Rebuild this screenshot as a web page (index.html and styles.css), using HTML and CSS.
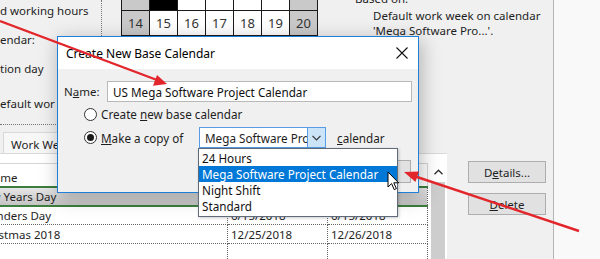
FILE: index.html
```html
<!DOCTYPE html>
<html lang="en">
<head>
    <meta charset="UTF-8">
    <meta name="viewport" content="width=device-width, initial-scale=1.0">
    <title>Create New Base Calendar</title>
    <link rel="stylesheet" href="styles.css">
</head>
<body>
    <div class="screen">
        <!-- Change Working Time window, behind the dialog -->
        <div class="window">
            <div class="panel">
                <div class="top">
                    <div class="labels">
                        <span>d working hours</span>
                        <span>endar:</span>
                        <span>tion day</span>
                        <span class="last">efault wor</span>
                    </div>

                    <div class="calendar">
                        <div class="cal-grid">
                            <div class="cell weekend"></div>
                            <div class="cell dark"></div>
                            <div class="cell"></div>
                            <div class="cell"></div>
                            <div class="cell"></div>
                            <div class="cell"></div>
                            <div class="cell weekend"></div>
                            <div class="cell weekend">14</div>
                            <div class="cell">15</div>
                            <div class="cell">16</div>
                            <div class="cell">17</div>
                            <div class="cell">18</div>
                            <div class="cell">19</div>
                            <div class="cell weekend">20</div>
                        </div>
                    </div>

                    <div class="based">
                        <div class="based-title">Based on:</div>
                        <div class="based-text">Default work week on calendar<br>'Mega Software Pro...'.</div>
                    </div>
                </div>

                <div class="bottom">
                    <div class="tabs-area">
                        <div class="sep"></div>
                        <div class="tabs">
                            <div class="tab">Work Weeks</div>
                        </div>
                        <div class="tab-panel">
                            <div class="grid-wrap">
                                <table class="exceptions">
                                    <colgroup>
                                        <col class="c-name">
                                        <col class="c-date">
                                        <col class="c-date">
                                    </colgroup>
                                    <thead>
                                        <tr><th class="h-name">Name</th><th>Start</th><th>Finish</th></tr>
                                    </thead>
                                    <tbody>
                                        <tr class="selected"><td>New Years Day</td><td>1/1/2018</td><td>1/2/2018</td></tr>
                                        <tr><td>Founders Day</td><td>6/15/2018</td><td>6/15/2018</td></tr>
                                        <tr><td>Christmas 2018</td><td>12/25/2018</td><td>12/26/2018</td></tr>
                                        <tr><td></td><td></td><td></td></tr>
                                    </tbody>
                                </table>
                                <div class="scrollbar">
                                    <div class="scroll-up">
                                        <svg width="9" height="6" viewBox="0 0 9 6"><path d="M0.5 5.2 L4.5 1.2 L8.5 5.2" fill="none" stroke="#333" stroke-width="1.4"/></svg>
                                    </div>
                                    <div class="scroll-thumb"></div>
                                </div>
                            </div>
                        </div>
                    </div>

                    <div class="side-buttons">
                        <button class="btn">D<u>e</u>tails...</button>
                        <button class="btn"><u>D</u>elete</button>
                    </div>
                </div>
            </div>
            <div class="outside"></div>
        </div>

        <!-- Create New Base Calendar dialog -->
        <div class="dialog">
            <div class="titlebar">
                <span class="title">Create New Base Calendar</span>
                <svg class="close" width="12" height="12" viewBox="0 0 12 12"><path d="M0.5 0.5 L11.5 11.5 M11.5 0.5 L0.5 11.5" stroke="#111" stroke-width="1.1"/></svg>
            </div>
            <div class="dialog-body">
                <div class="name-row">
                    <label class="name-label" for="cal-name">N<u>a</u>me:</label>
                    <div class="textbox" id="cal-name">US Mega Software Project Calendar</div>
                </div>

                <div class="option">
                    <span class="radio"></span>
                    <span>Create <u>n</u>ew base calendar</span>
                </div>

                <div class="option copy">
                    <div class="copy-label">
                        <span class="radio checked"></span>
                        <span><u>M</u>ake a copy of</span>
                    </div>
                    <div class="combo">
                        <div class="combo-value">Mega Software Project Calendar</div>
                        <div class="combo-btn">
                            <svg width="9" height="6" viewBox="0 0 9 6"><path d="M0.5 0.8 L4.5 4.8 L8.5 0.8" fill="none" stroke="#333" stroke-width="1.2"/></svg>
                        </div>
                        <ul class="droplist">
                            <li>24 Hours</li>
                            <li class="active">Mega Software Project Calendar</li>
                            <li>Night Shift</li>
                            <li>Standard</li>
                        </ul>
                    </div>
                    <span class="combo-after"><u>c</u>alendar</span>
                </div>

                <div class="dialog-footer">
                    <button class="btn ok">OK</button>
                </div>
            </div>
        </div>

        <svg class="cursor" width="13" height="20" viewBox="0 0 13 20">
            <path d="M1 1 L1 16 L4.6 12.6 L7.2 18.6 L9.4 17.6 L6.8 11.8 L11.6 11.8 Z" fill="#fff" stroke="#000" stroke-width="1" stroke-linejoin="round"/>
        </svg>

        <!-- red callout arrows -->
        <svg class="arrows" width="600" height="259" viewBox="0 0 600 259">
            <line x1="0" y1="21" x2="157" y2="80" stroke="#e2262b" stroke-width="2.4"/>
            <polygon points="167,84 153,85.8 157,75" fill="#e2262b"/>
            <line x1="579" y1="231" x2="414" y2="176" stroke="#e2262b" stroke-width="2.4"/>
            <polygon points="404,172 419,171.5 415.5,182" fill="#e2262b"/>
        </svg>
    </div>
</body>
</html>
```

FILE: styles.css
```css
:root {
    --face: #f0f0f0;
    --text: #1e1e1e;
    --accent: #1f7ed6;
    --select: #0078d7;
    --arrow: #e2262b;
}

* {
    box-sizing: border-box;
    margin: 0;
    padding: 0;
}

body {
    background: var(--face);
    color: var(--text);
    font-family: "Noto Sans", "Liberation Sans", sans-serif;
    font-size: 11.5px;
}

.screen {
    position: relative;
    width: 600px;
    height: 259px;
    overflow: hidden;
}

.window {
    display: flex;
    height: 100%;
}

.panel {
    width: 554px;
    background: var(--face);
    border-right: 1px solid #b4b4b4;
}

.outside {
    flex: 1;
    background: #f9f9f9;
}

/* top area: labels, month grid, legend */
.top {
    display: grid;
    grid-template-columns: 101px 217px 1fr;
    height: 124px;
}

.labels {
    display: flex;
    flex-direction: column;
    gap: 12px;
    padding-top: 2px;
    line-height: 17px;
    white-space: nowrap;
}

.labels .last {
    margin-top: 6px;
}

.calendar {
    border-left: 1px dotted #777;
    padding-left: 19px;
}

.cal-grid {
    display: grid;
    grid-template-columns: repeat(7, 27px);
    grid-template-rows: 10px 24px;
    gap: 1px;
    width: 197px;
    background: #1a1a1a;
    border: 1px solid #1a1a1a;
    border-top: none;
}

.cell {
    background: #fff;
    font-size: 13px;
    color: #333;
    display: flex;
    align-items: center;
    justify-content: center;
}

.cell.weekend {
    background: #c9c9c9;
}

.cell.dark {
    background: #000;
}

.based {
    line-height: 15px;
    white-space: nowrap;
}

.based-title {
    margin-top: -9px;
    padding-left: 37px;
}

.based-text {
    padding-left: 55px;
    margin-top: 2px;
}

/* bottom area: tabs, exceptions grid, buttons */
.bottom {
    display: flex;
}

.tabs-area {
    width: 447px;
}

.sep {
    width: 100px;
    border-top: 1px dotted #777;
}

.tabs {
    display: flex;
    padding: 7px 0 0 3px;
}

.tab {
    width: 86px;
    height: 21px;
    padding: 4px 0 0 7px;
    background: #f7f7f7;
    border: 1px solid #d9d9d9;
    border-bottom: none;
    white-space: nowrap;
    overflow: hidden;
}

.tab-panel {
    height: 120px;
    background: #fff;
    border-top: 1px solid #d9d9d9;
    padding-top: 9px;
    overflow: hidden;
}

.grid-wrap {
    display: flex;
    align-items: flex-start;
}

.exceptions {
    width: 451px;
    margin-left: -24px;
    table-layout: fixed;
    border-collapse: collapse;
    white-space: nowrap;
}

.c-name {
    width: 251px;
}

.c-date {
    width: 100px;
}

.exceptions th {
    height: 23px;
    font-weight: normal;
    text-align: left;
    vertical-align: bottom;
    padding: 0 0 1px 6px;
    border: 1px solid #d5d5d5;
    border-bottom: 2px solid #3d7d3d;
}

.exceptions th.h-name {
    padding-left: 8px;
}

.exceptions td {
    height: 19px;
    padding-left: 3px;
    overflow: hidden;
    border-right: 1px dotted #666;
    border-bottom: 1px dotted #666;
}

.exceptions td:first-child {
    padding-left: 0;
}

.exceptions tr.selected td {
    background: linear-gradient(#e6e6e6, #c4c4c4);
    border-bottom: 2px solid #3d7d3d;
}

.scrollbar {
    width: 18px;
    margin-left: 1px;
    display: flex;
    flex-direction: column;
    align-items: center;
}

.scroll-up {
    width: 17px;
    height: 18px;
    display: flex;
    align-items: center;
    justify-content: center;
}

.scroll-thumb {
    width: 14px;
    height: 90px;
    margin-top: 1px;
    background: #cdcdcd;
}

.side-buttons {
    display: flex;
    flex-direction: column;
    gap: 10px;
    margin: 37px 0 0 21px;
}

.btn {
    width: 78px;
    height: 22px;
    font-family: inherit;
    font-size: 11.5px;
    color: var(--text);
    background: #e1e1e1;
    border: 1px solid #adadad;
}

/* dialog */
.dialog {
    position: absolute;
    left: 57px;
    top: 36px;
    width: 362px;
    height: 157px;
    background: var(--face);
    border: 1px solid var(--accent);
    box-shadow: 2px 4px 18px rgba(0, 0, 0, 0.28);
}

.titlebar {
    height: 32px;
    background: #fff;
    display: flex;
    align-items: center;
    justify-content: space-between;
    padding: 0 10px 0 8px;
}

.title {
    font-size: 12px;
    color: #000;
}

.dialog-body {
    padding: 12px 6px 0 6px;
}

.name-row {
    display: flex;
    align-items: center;
}

.name-label {
    width: 43px;
}

.textbox {
    width: 305px;
    height: 21px;
    background: #fff;
    border: 1px solid #b9b9b9;
    padding: 2px 0 0 5px;
    font-size: 11.7px;
    color: #111;
}

.option {
    display: flex;
    align-items: center;
    gap: 4px;
    padding-left: 20px;
    height: 16px;
    margin-top: 4px;
    font-size: 11.7px;
}

.option.copy {
    gap: 0;
    height: 21px;
    margin-top: 5px;
}

.copy-label {
    display: flex;
    align-items: center;
    gap: 4px;
    width: 115px;
}

.radio {
    width: 13px;
    height: 13px;
    border: 1px solid #333;
    border-radius: 50%;
    background: #fff;
    position: relative;
}

.radio.checked::after {
    content: "";
    position: absolute;
    left: 2px;
    top: 2px;
    width: 7px;
    height: 7px;
    border-radius: 50%;
    background: #1a1a1a;
}

.combo {
    position: relative;
    display: flex;
    width: 127px;
    height: 21px;
    background: #fff;
    border: 1px solid #569de5;
}

.combo-value {
    flex: 1;
    overflow: hidden;
    white-space: nowrap;
    padding: 2px 0 0 5px;
}

.combo-btn {
    width: 18px;
    background: #cce4f7;
    border-left: 1px solid #569de5;
    display: flex;
    align-items: center;
    justify-content: center;
}

.combo-after {
    margin-left: 11px;
}

.droplist {
    position: absolute;
    left: -2px;
    top: 20px;
    width: 200px;
    list-style: none;
    background: #fff;
    border: 1px solid #5f6b7a;
    padding: 1px 0 2px;
    z-index: 2;
    box-shadow: 1px 1px 3px rgba(0, 0, 0, 0.2);
}

.droplist li {
    height: 16px;
    line-height: 16px;
    padding-left: 3px;
    white-space: nowrap;
    color: #111;
}

.droplist li.active {
    background: var(--select);
    color: #fff;
}

.dialog-footer {
    display: flex;
    justify-content: flex-end;
    margin-top: 12px;
    padding-right: 1px;
}

.btn.ok {
    width: 70px;
    height: 23px;
}

.cursor {
    position: absolute;
    left: 387px;
    top: 171px;
    z-index: 3;
}

.arrows {
    position: absolute;
    left: 0;
    top: 0;
    pointer-events: none;
    z-index: 4;
}
```
